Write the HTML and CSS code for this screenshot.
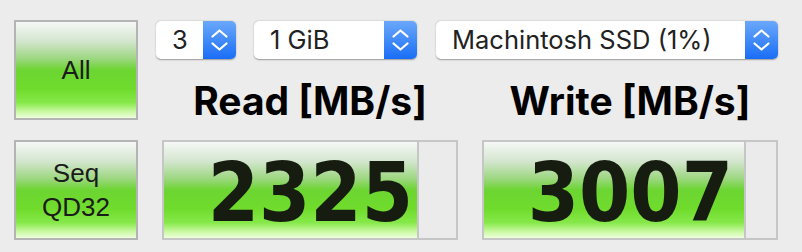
FILE: index.html
```html
<!DOCTYPE html>
<html lang="en">
<head>
  <meta charset="UTF-8" />
  <title>Disk Mark</title>
  <link rel="stylesheet" href="styles.css">
</head>
<body>
  <div class="window">
    <div class="row">
      <button class="mode">All</button>
      <div class="controls">
        <div class="selects">
          <div class="select count">
            <span class="label">3</span>
            <span class="stepper"><svg viewBox="0 0 33 38"><polyline points="9.5,15.5 16.5,9.5 23.5,15.5" /><polyline points="9.5,22.5 16.5,28.5 23.5,22.5" /></svg></span>
          </div>
          <div class="select size">
            <span class="label">1 GiB</span>
            <span class="stepper"><svg viewBox="0 0 33 38"><polyline points="9.5,15.5 16.5,9.5 23.5,15.5" /><polyline points="9.5,22.5 16.5,28.5 23.5,22.5" /></svg></span>
          </div>
          <div class="select drive">
            <span class="label">Machintosh SSD (1%)</span>
            <span class="stepper"><svg viewBox="0 0 33 38"><polyline points="9.5,15.5 16.5,9.5 23.5,15.5" /><polyline points="9.5,22.5 16.5,28.5 23.5,22.5" /></svg></span>
          </div>
        </div>
        <div class="heads">
          <h2>Read [MB/s]</h2>
          <h2>Write [MB/s]</h2>
        </div>
      </div>
    </div>

    <div class="row results">
      <button class="mode">Seq<br>QD32</button>
      <div class="bars">
        <div class="bar">
          <div class="fill" style="width: 87.3%"></div>
          <span class="value">2325</span>
        </div>
        <div class="bar">
          <div class="fill" style="width: 89.7%"></div>
          <span class="value">3007</span>
        </div>
      </div>
    </div>
  </div>
</body>
</html>
```

FILE: styles.css
```css
body {
  margin: 0;
  background-color: #ececec;
  font-family: Inter, "Liberation Sans", sans-serif;
  color: #222;
}
.window {
  padding: 20px 0 0 14px;
}
.row {
  display: flex;
  align-items: flex-start;
}
.results {
  margin-top: 20px;
}
.mode {
  width: 124px;
  height: 100px;
  flex: none;
  margin: 0;
  padding: 0;
  border: 2px solid #b4b4b4;
  font-family: "Liberation Sans", Arial, sans-serif;
  font-size: 26px;
  line-height: 34px;
  color: #1b1b1b;
  cursor: pointer;
  background: linear-gradient(#f6f8f6 0%, #d4e6cf 20%, #9dd781 38%, #6cd532 50%, #70dc2c 70%, #86e84a 84%, #c8f8a0 93%, #eeffdc 100%);
}
.controls {
  margin-left: 18px;
  padding-top: 1px;
}
.selects {
  display: flex;
  gap: 18px;
}
.select {
  height: 38px;
  display: flex;
  align-items: center;
  background: #fff;
  border-radius: 5px;
  box-shadow: 0 0.5px 1.5px rgba(0, 0, 0, 0.35);
  font-size: 25.5px;
}
.select .label {
  flex: 1;
  padding: 0 0 1px 16px;
}
.count { width: 80px; }
.size { width: 163px; }
.drive { width: 342px; margin-left: 1px; }
.stepper {
  width: 33px;
  height: 38px;
  border-radius: 0 5px 5px 0;
  background: linear-gradient(#6aa8fa, #1a6ef6);
}
.stepper svg {
  display: block;
  width: 33px;
  height: 38px;
  fill: none;
  stroke: #fff;
  stroke-width: 2.2;
  stroke-linecap: round;
  stroke-linejoin: round;
}
.heads {
  display: grid;
  grid-template-columns: 296px 296px;
  column-gap: 24px;
  margin: 23px 0 0 6px;
}
.heads h2 {
  margin: 0;
  font-size: 39px;
  line-height: 38px;
  font-weight: 700;
  text-align: center;
  color: #000;
}
.bars {
  display: grid;
  grid-template-columns: 296px 296px;
  column-gap: 24px;
  margin-left: 24px;
}
.bar {
  display: grid;
  height: 100px;
  box-sizing: border-box;
  border: 2px solid #c6c6c6;
  background: #ebebeb;
}
.fill, .value {
  grid-area: 1 / 1;
}
.fill {
  box-sizing: border-box;
  border-right: 2px solid #c6c6c6;
  background: linear-gradient(#f6f8f6 0%, #d4e6cf 20%, #9dd781 38%, #6cd532 50%, #70dc2c 70%, #86e84a 84%, #c8f8a0 93%, #eeffdc 100%);
}
.value {
  justify-self: end;
  align-self: center;
  padding: 6px 43px 0 0;
  font-family: "DejaVu Sans Condensed", "DejaVu Sans", sans-serif;
  font-weight: 700;
  font-size: 82px;
  line-height: 1;
  color: #161c10;
}
```
